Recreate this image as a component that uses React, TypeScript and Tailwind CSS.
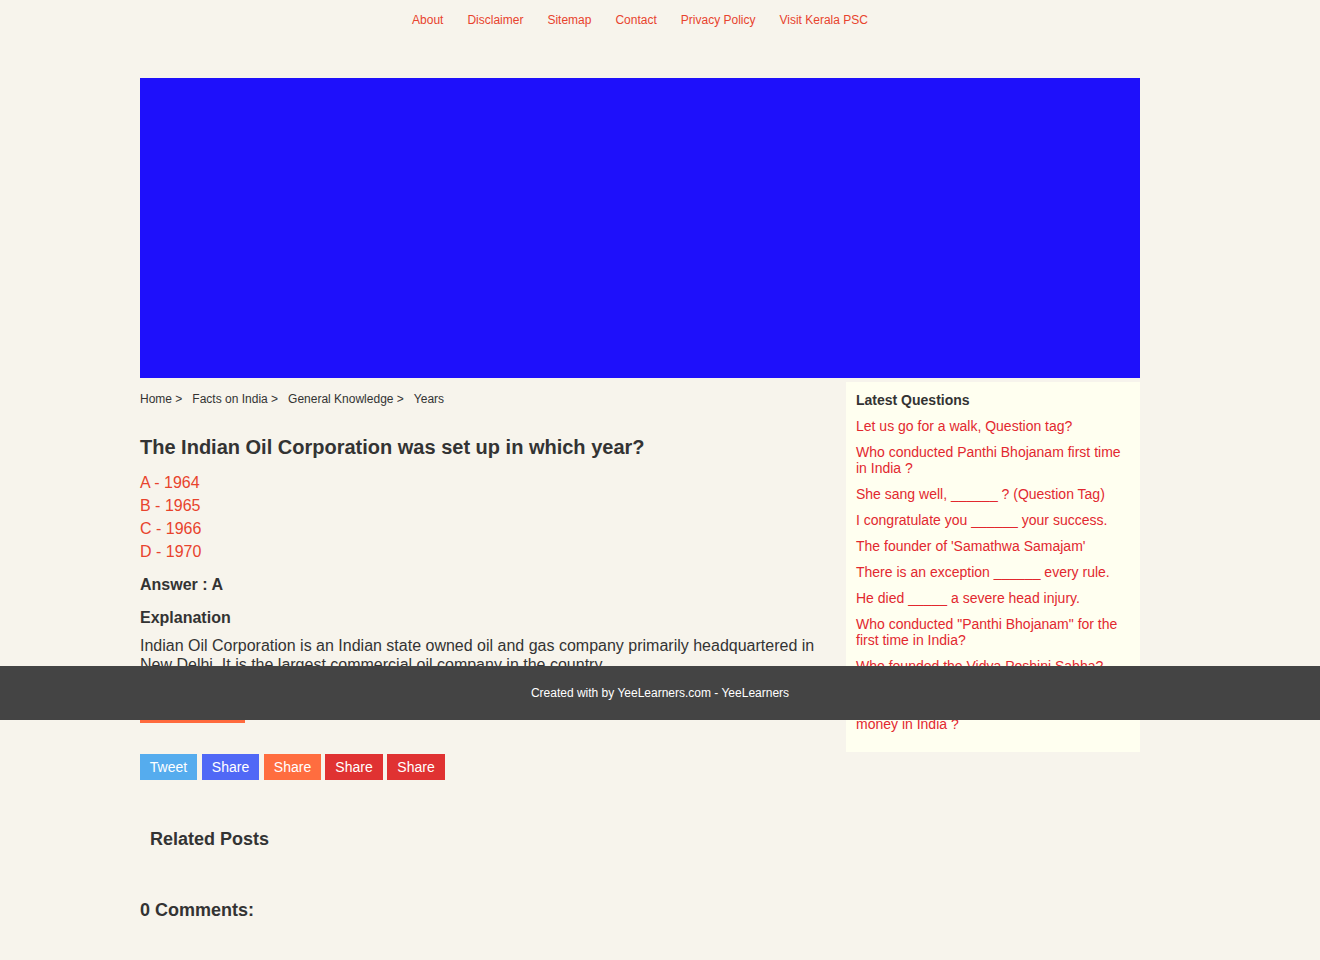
import React from "react";

const questions: string[][] = [
  ["Let us go for a walk, Question tag?"],
  ["Who conducted Panthi Bhojanam first time", "in India ?"],
  ["She sang well, ______ ? (Question Tag)"],
  ["I congratulate you ______ your success."],
  ["The founder of 'Samathwa Samajam'"],
  ["There is an exception ______ every rule."],
  ["He died _____ a severe head injury."],
  ["Who conducted \"Panthi Bhojanam\" for the", "first time in India?"],
  ["Who founded the Vidya Poshini Sabha?"],
  ["Which was the first bank to issue", "the currency notes or the paper", "money in India ?"],
];

export default function App() {
  return (
    <div className="relative min-h-[960px] bg-[#f7f4ec] font-['Liberation_Sans',Arial,sans-serif] text-[#333333]">
      <nav className="flex w-[1280px] justify-center gap-[24px] pt-[13px] text-[12px] leading-[14px] text-[#e8432d]">
        <a>About</a>
        <a>Disclaimer</a>
        <a>Sitemap</a>
        <a>Contact</a>
        <a>Privacy Policy</a>
        <a>Visit Kerala PSC</a>
      </nav>

      <div className="ml-[140px] w-[1000px]">
        <div className="mt-[51px] h-[300px] bg-[#1e10fb]" />

        <div className="flex items-start">
          <main className="w-[690px]">
            <div className="mt-[14px] flex gap-[10px] text-[12px] leading-[14px] text-[#333]">
              <span>Home &gt;</span>
              <span>Facts on India &gt;</span>
              <span>General Knowledge &gt;</span>
              <span>Years</span>
            </div>

            <h1 className="mt-[29px] text-[20px] font-bold leading-[24px]">
              The Indian Oil Corporation was set up in which year?
            </h1>

            <div className="mt-[12px] text-[16px] leading-[23px] text-[#e8432d]">
              <div>A - 1964</div>
              <div>B - 1965</div>
              <div>C - 1966</div>
              <div>D - 1970</div>
            </div>

            <div className="mt-[12px] text-[16px] font-bold leading-[19px]">Answer : A</div>
            <div className="mt-[14px] text-[16px] font-bold leading-[19px]">Explanation</div>
            <p className="mt-[9px] text-[16px] leading-[19px]">
              Indian Oil Corporation is an Indian state owned oil and gas company primarily headquartered in New Delhi. It is the largest commercial oil company in the country.
            </p>

            <div className="mt-[16px] flex h-[33px] w-[105px] items-center justify-center bg-[#ff6a3d] text-[14px] text-white">
              Discuss
            </div>

            <div className="mt-[31px] flex text-[14px] leading-[26px] text-white">
              <span className="w-[57px] bg-[#55acee] text-center">Tweet</span>
              <span className="ml-[5px] w-[57px] bg-[#5068f6] text-center">Share</span>
              <span className="ml-[5px] w-[57px] bg-[#ff6d3f] text-center">Share</span>
              <span className="ml-[4px] w-[58px] bg-[#e03232] text-center">Share</span>
              <span className="ml-[4px] w-[58px] bg-[#e03232] text-center">Share</span>
            </div>

            <h2 className="mt-[49px] pl-[10px] text-[18px] font-bold leading-[21px]">Related Posts</h2>
            <h2 className="mt-[50px] text-[18px] font-bold leading-[21px]">0 Comments:</h2>
          </main>

          <aside className="ml-auto mt-[4px] w-[294px] bg-[#fffff0] px-[10px] pt-[10px] pb-[20px]">
            <h3 className="text-[14px] font-bold leading-[16px] text-[#333]">Latest Questions</h3>
            {questions.map((q, i) => (
              <div key={i} className="mt-[10px] text-[14px] leading-[16px] text-[#e2282f]">
                {q.map((line, j) => (
                  <div key={j}>{line}</div>
                ))}
              </div>
            ))}
          </aside>
        </div>
      </div>

      <footer className="absolute left-0 right-0 top-[666px] flex h-[54px] items-center justify-center bg-[#444444] text-[12px] text-white">
        Created with by YeeLearners.com - YeeLearners
      </footer>
    </div>
  );
}
